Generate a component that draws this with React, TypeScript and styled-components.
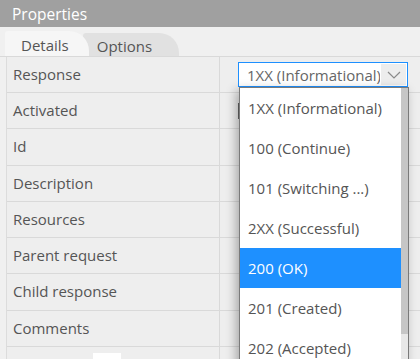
import styled, { createGlobalStyle } from "styled-components";

const GlobalStyle = createGlobalStyle`
    body {
        margin: 0;
        background: #f0f0f0;
        font-family: "Open Sans", "Liberation Sans", sans-serif;
    }
`;

const fields = [
    "Response",
    "Activated",
    "Id",
    "Description",
    "Resources",
    "Parent request",
    "Child response",
    "Comments",
];

const options = [
    "1XX (Informational)",
    "100 (Continue)",
    "101 (Switching ...)",
    "2XX (Successful)",
    "200 (OK)",
    "201 (Created)",
    "202 (Accepted)",
];

export default function App() {
    return (
        <Panel>
            <GlobalStyle />
            <TitleBar>Properties</TitleBar>
            <TabStrip>
                <Tab $active>Details</Tab>
                <Tab>Options</Tab>
            </TabStrip>
            <Grid>
                {fields.map((name, i) => (
                    <Row key={name} $tall={i === 2 || i === 6}>
                        <Label>{name}</Label>
                        <Value>
                            {i === 0 && (
                                <Select>
                                    <SelectText>1XX (Informational)</SelectText>
                                    <ArrowButton>
                                        <svg width="14" height="8" viewBox="0 0 14 8">
                                            <path d="M1 1l6 6 6-6" fill="none" stroke="#8a8a8a" strokeWidth="1.2" />
                                        </svg>
                                    </ArrowButton>
                                    <List>
                                        <Options>
                                            {options.map((o) => (
                                                <Option key={o} $selected={o === "200 (OK)"}>{o}</Option>
                                            ))}
                                        </Options>
                                        <ScrollTrack>
                                            <ScrollThumb />
                                        </ScrollTrack>
                                    </List>
                                </Select>
                            )}
                            {i === 1 && <Checkbox />}
                        </Value>
                    </Row>
                ))}
                <Row>
                    <Label>
                        <WhiteBox />
                    </Label>
                    <Value />
                </Row>
            </Grid>
        </Panel>
    );
}

const Panel = styled.div`
    position: relative;
    width: 420px;
    height: 359px;
    overflow: hidden;
    background: #f0f0f0;
`;

const TitleBar = styled.div`
    height: 27px;
    line-height: 28px;
    padding-left: 12px;
    background: #a0a0a0;
    color: #ffffff;
    font-size: 15.5px;
`;

const TabStrip = styled.div`
    display: flex;
    align-items: flex-end;
    height: 29px;
    padding-left: 5px;
    border-bottom: 1px solid #d9d9d9;
`;

const Tab = styled.div<{ $active?: boolean }>`
    position: relative;
    z-index: ${({ $active }) => ($active ? 2 : 1)};
    height: ${({ $active }) => ($active ? "25px" : "23px")};
    line-height: ${({ $active }) => ($active ? "28px" : "26px")};
    padding: ${({ $active }) => ($active ? "0 20px 0 16px" : "0 27px 0 14px")};
    margin-left: ${({ $active }) => ($active ? "0" : "-6px")};
    border-radius: 3px 20px 0 0;
    background: ${({ $active }) => ($active ? "#f6f6f6" : "#e1e1e1")};
    color: #555555;
    font-size: 15px;
`;

const Grid = styled.div`
    margin-left: 6px;
    border-left: 1px solid #dcdcdc;
`;

const Row = styled.div<{ $tall?: boolean }>`
    display: grid;
    grid-template-columns: 213px 1fr;
    height: ${({ $tall }) => ($tall ? "36px" : "35px")};
    border-bottom: 1px solid #d9d9d9;
    background: #eeeeee;
`;

const Label = styled.div`
    position: relative;
    display: flex;
    align-items: center;
    padding: 0 0 2px 6px;
    border-right: 1px solid #d9d9d9;
    color: #555555;
    font-size: 15px;
`;

const Value = styled.div`
    position: relative;
    display: flex;
    align-items: center;
    padding-left: 18px;
`;

const Select = styled.div`
    position: relative;
    z-index: 5;
    display: flex;
    align-items: stretch;
    width: 168px;
    height: 23px;
    border: 1px solid #1e90ff;
    background: #ffffff;
`;

const SelectText = styled.div`
    flex: 1;
    padding-left: 8px;
    line-height: 24px;
    color: #666666;
    font-size: 15px;
    white-space: nowrap;
    overflow: hidden;
`;

const ArrowButton = styled.div`
    display: flex;
    align-items: center;
    justify-content: center;
    width: 25px;
    margin: 1px;
    background: #ededed;
`;

const List = styled.div`
    position: absolute;
    top: 24px;
    left: 0;
    display: flex;
    width: 168px;
    height: 300px;
    border: 1px solid #7a7a7a;
    background: #ffffff;
    box-shadow: -3px 3px 10px rgba(0, 0, 0, 0.3);
`;

const Options = styled.div`
    flex: 1;
`;

const Option = styled.div<{ $selected?: boolean }>`
    height: 40px;
    line-height: 40px;
    padding-left: 8px;
    font-size: 15px;
    white-space: nowrap;
    color: ${({ $selected }) => ($selected ? "#ffffff" : "#555555")};
    background: ${({ $selected }) => ($selected ? "#1e90ff" : "transparent")};
`;

const ScrollTrack = styled.div`
    width: 7px;
    background: #e8e8e8;
`;

const ScrollThumb = styled.div`
    height: 246px;
    background: #c6c6c6;
`;

const Checkbox = styled.div`
    width: 12px;
    height: 12px;
    border: 2px solid #666666;
    background: #ffffff;
`;

const WhiteBox = styled.div`
    position: absolute;
    left: 86px;
    top: 6px;
    width: 28px;
    height: 24px;
    background: #ffffff;
`;
